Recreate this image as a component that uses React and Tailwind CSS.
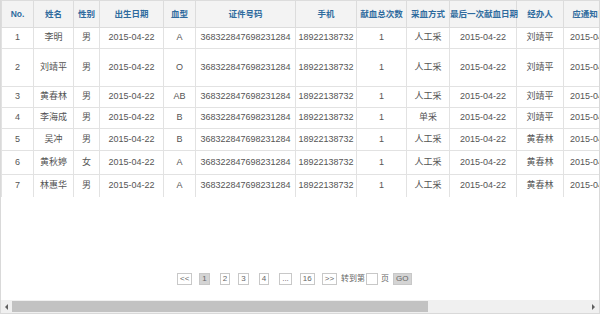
import React from "react";

const columns = [
  { title: "No.", width: 32 },
  { title: "姓名", width: 40 },
  { title: "性别", width: 26 },
  { title: "出生日期", width: 64 },
  { title: "血型", width: 32 },
  { title: "证件号码", width: 100 },
  { title: "手机", width: 61 },
  { title: "献血总次数", width: 50 },
  { title: "采血方式", width: 43 },
  { title: "最后一次献血日期", width: 67 },
  { title: "经办人", width: 47 },
  { title: "应通知日期", width: 60 },
];

const rows = [
  { no: 1, name: "李明", sex: "男", blood: "A", way: "人工采", agent: "刘靖平", h: 21 },
  { no: 2, name: "刘靖平", sex: "男", blood: "O", way: "人工采", agent: "刘靖平", h: 38 },
  { no: 3, name: "黄春林", sex: "男", blood: "AB", way: "人工采", agent: "刘靖平", h: 21 },
  { no: 4, name: "李海成", sex: "男", blood: "B", way: "单采", agent: "刘靖平", h: 21 },
  { no: 5, name: "吴冲", sex: "男", blood: "B", way: "人工采", agent: "黄春林", h: 22 },
  { no: 6, name: "黄秋婷", sex: "女", blood: "A", way: "人工采", agent: "黄春林", h: 24 },
  { no: 7, name: "林惠华", sex: "男", blood: "A", way: "人工采", agent: "黄春林", h: 23 },
];

const font = { fontFamily: '"Liberation Sans", "Noto Sans CJK SC", sans-serif' };

function PageButton({ children, active }) {
  return (
    <span
      className={`inline-flex h-[12px] items-center justify-center border border-[#c8c8c8] px-[2px] text-[8px] leading-none text-[#666] ${
        active ? "bg-[#d4d4d4]" : "bg-white"
      }`}
    >
      {children}
    </span>
  );
}

export default function App() {
  return (
    <div className="h-[315px] w-[604px] bg-white" style={font}>
      <div className="flex h-[314px] w-[600px] flex-col border-b border-l border-r border-[#d9d9d9]">
        {/* Table */}
        <div className="h-[197px] overflow-hidden">
          <table className="table-fixed border-collapse" style={{ width: 622 }}>
            <colgroup>
              {columns.map((c) => (
                <col key={c.title} style={{ width: c.width }} />
              ))}
            </colgroup>
            <thead>
              <tr className="h-[27px] bg-[#f3f3f3]">
                {columns.map((c) => (
                  <th
                    key={c.title}
                    className="whitespace-nowrap border border-[#dcdcdc] p-0 text-center text-[8.5px] font-bold text-[#2f6b9e]"
                  >
                    {c.title}
                  </th>
                ))}
              </tr>
            </thead>
            <tbody>
              {rows.map((r) => (
                <tr key={r.no} style={{ height: r.h }}>
                  {[
                    r.no,
                    r.name,
                    r.sex,
                    "2015-04-22",
                    r.blood,
                    "368322847698231284",
                    "18922138732",
                    1,
                    r.way,
                    "2015-04-22",
                    r.agent,
                    "2015-04-22",
                  ].map((v, i) => (
                    <td
                      key={i}
                      className={`overflow-hidden whitespace-nowrap border border-[#e2e2e2] p-0 text-[9px] text-[#555] ${
                        i === 11 ? "pl-[6px] text-left" : "text-center"
                      }`}
                    >
                      {v}
                    </td>
                  ))}
                </tr>
              ))}
            </tbody>
          </table>
        </div>

        {/* Pagination */}
        <div className="mt-[76px] flex h-[12px] items-center pl-[176px] text-[8px] text-[#666]">
          <PageButton>&lt;&lt;</PageButton>
          <span className="ml-[7px]">
            <PageButton active>1</PageButton>
          </span>
          <span className="ml-[10px]">
            <PageButton>2</PageButton>
          </span>
          <span className="ml-[8px]">
            <PageButton>3</PageButton>
          </span>
          <span className="ml-[10px]">
            <PageButton>4</PageButton>
          </span>
          <span className="ml-[10px]">
            <PageButton>...</PageButton>
          </span>
          <span className="ml-[8px]">
            <PageButton>16</PageButton>
          </span>
          <span className="ml-[7px]">
            <PageButton>&gt;&gt;</PageButton>
          </span>
          <span className="ml-[4px]">转到第</span>
          <span className="ml-[1px] inline-block h-[12px] w-[12px] border border-[#c8c8c8] bg-white" />
          <span className="ml-[3px]">页</span>
          <span className="ml-[4px]">
            <PageButton active>GO</PageButton>
          </span>
        </div>

        {/* Horizontal scrollbar */}
        <div className="mt-auto flex h-[13px] items-center bg-[#f0f0f0]">
          <div className="flex w-[11px] items-center justify-center">
            <span className="block h-0 w-0 border-y-[3px] border-r-[3px] border-y-transparent border-r-[#606060]" />
          </div>
          <div className="h-[11px] w-[416px] bg-[#c2c2c2]" />
          <div className="flex-1" />
          <div className="flex w-[11px] items-center justify-center">
            <span className="block h-0 w-0 border-y-[3px] border-l-[3px] border-y-transparent border-l-[#606060]" />
          </div>
        </div>
      </div>
    </div>
  );
}
